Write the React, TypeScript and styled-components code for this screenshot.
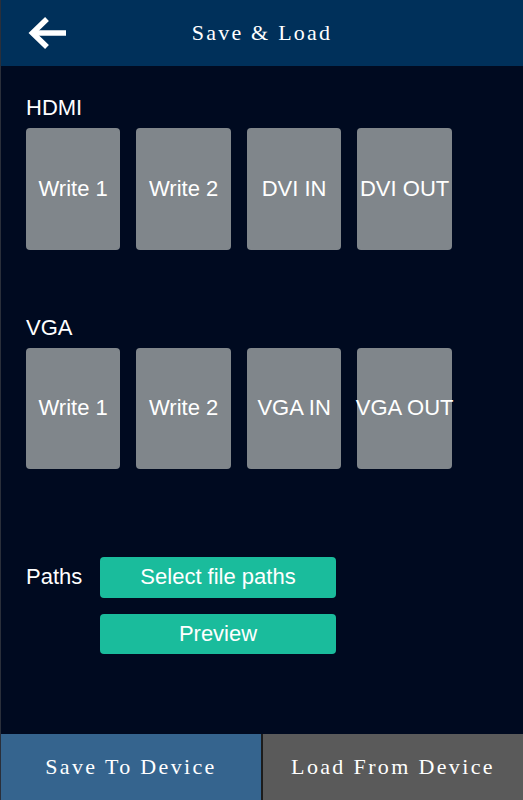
import React from "react";
import styled, { createGlobalStyle } from "styled-components";

const Global = createGlobalStyle`
  html, body { margin: 0; padding: 0; background: #000a20; }
  body { font-family: "Liberation Sans", Arial, sans-serif; }
  * { box-sizing: border-box; }
`;

const Page = styled.div`
  width: 523px;
  height: 800px;
  display: flex;
  flex-direction: column;
  background: #000a20;
  border-left: 1px solid #2a2f3a;
  overflow: hidden;
`;

const Header = styled.header`
  height: 66px;
  flex: none;
  background: #00305a;
  display: grid;
  grid-template-columns: 90px 1fr 90px;
  align-items: center;
`;

const BackButton = styled.button`
  border: 0;
  background: none;
  padding: 0 0 0 27px;
  height: 100%;
  display: flex;
  align-items: center;
  cursor: pointer;
`;

const Title = styled.h1`
  margin: 0;
  text-align: center;
  color: #ffffff;
  font-family: "Liberation Serif", "Times New Roman", serif;
  font-weight: normal;
  font-size: 22px;
  letter-spacing: 2.2px;
`;

const Main = styled.main`
  flex: 1;
  display: flex;
  flex-direction: column;
  padding: 29px 0 0 25px;
`;

const Section = styled.section<{ $gap: number }>`
  display: flex;
  flex-direction: column;
  margin-bottom: ${(p) => p.$gap}px;
`;

const SectionLabel = styled.div`
  color: #ffffff;
  font-size: 22px;
  line-height: 25px;
  height: 33px;
`;

const CardRow = styled.div`
  display: flex;
  gap: 16.2px;
`;

const Card = styled.button`
  width: 94.3px;
  height: 121.5px;
  border: 0;
  border-radius: 4px;
  background: #80868b;
  color: #ffffff;
  font-family: "Liberation Sans", Arial, sans-serif;
  font-size: 22px;
  padding: 0;
  white-space: nowrap;
  display: flex;
  align-items: center;
  justify-content: center;
  overflow: visible;
`;

const PathsGrid = styled.div`
  display: grid;
  grid-template-columns: 74px 236px;
  row-gap: 16px;
  align-items: center;
`;

const PathsLabel = styled.div`
  color: #ffffff;
  font-size: 22px;
`;

const ActionButton = styled.button<{ $col?: number }>`
  grid-column: ${(p) => p.$col ?? "auto"};
  height: 40.5px;
  border: 0;
  border-radius: 4px;
  background: #1abc9c;
  color: #ffffff;
  font-family: "Liberation Sans", Arial, sans-serif;
  font-size: 22px;
  padding: 0;
`;

const Footer = styled.footer`
  height: 66px;
  flex: none;
  display: grid;
  grid-template-columns: 260px 1fr;
  gap: 2px;
  background: #1c1c1c;
`;

const FooterButton = styled.button<{ $bg: string }>`
  border: 0;
  background: ${(p) => p.$bg};
  color: #ffffff;
  font-family: "Liberation Serif", "Times New Roman", serif;
  font-size: 22px;
  letter-spacing: 2.35px;
  padding: 0;
`;

const BackArrow = () => (
  <svg width="40" height="34" viewBox="0 0 40 34" fill="none">
    <path d="M4 17 H38" stroke="#fff" strokeWidth="5.5" />
    <path d="M19 3 L4.5 17 L19 31" stroke="#fff" strokeWidth="5.5" strokeLinejoin="miter" />
  </svg>
);

const groups = [
  { label: "HDMI", items: ["Write 1", "Write 2", "DVI IN", "DVI OUT"], gap: 65 },
  { label: "VGA", items: ["Write 1", "Write 2", "VGA IN", "VGA OUT"], gap: 88 },
];

export default function App() {
  return (
    <>
      <Global />
      <Page>
        <Header>
          <BackButton aria-label="Back">
            <BackArrow />
          </BackButton>
          <Title>Save &amp; Load</Title>
          <div />
        </Header>
        <Main>
          {groups.map((g) => (
            <Section key={g.label} $gap={g.gap}>
              <SectionLabel>{g.label}</SectionLabel>
              <CardRow>
                {g.items.map((it) => (
                  <Card key={it}>{it}</Card>
                ))}
              </CardRow>
            </Section>
          ))}
          <PathsGrid>
            <PathsLabel>Paths</PathsLabel>
            <ActionButton>Select file paths</ActionButton>
            <ActionButton $col={2}>Preview</ActionButton>
          </PathsGrid>
        </Main>
        <Footer>
          <FooterButton $bg="#35648e">Save To Device</FooterButton>
          <FooterButton $bg="#5a5a5a">Load From Device</FooterButton>
        </Footer>
      </Page>
    </>
  );
}
